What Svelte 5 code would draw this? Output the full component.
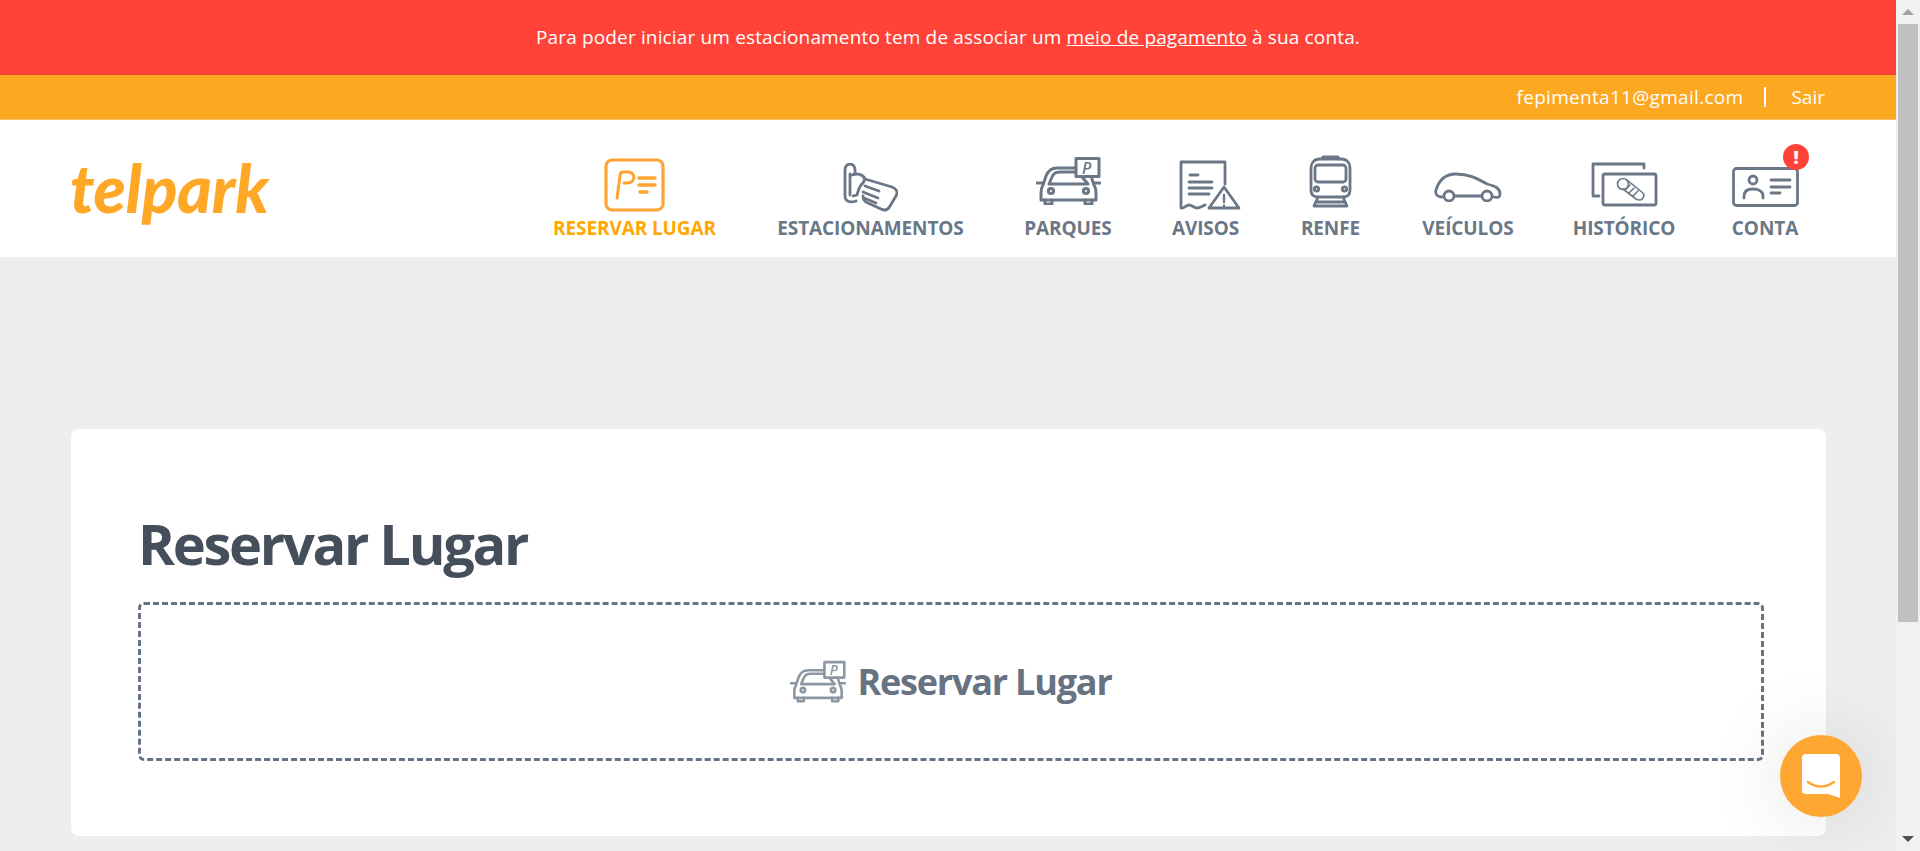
<script>
  const links = ['Reservar Lugar', 'Estacionamentos', 'Parques', 'Avisos', 'Renfe', 'Veículos', 'Histórico', 'Conta'];
</script>

{#snippet carIcon()}
  <svg class="car" viewBox="0 0 65 48" fill="none" stroke="currentColor" stroke-width="3" stroke-linecap="round" stroke-linejoin="round">
    <path d="M39 11H21c-6 0-9 3-11 8l-3 9c-2 3-2 5-2 8v7h55v-7c0-3 0-5-2-8l-2-6" />
    <path d="M13 27l3-7c1-3 4-5 8-5h15M13 27h39M46 20l6 7" />
    <path d="M1 26h6M58 26h6" />
    <circle cx="15" cy="34" r="2.6" />
    <circle cx="50" cy="34" r="2.6" />
    <path d="M9 43v4h7v-4M49 43v4h7v-4" />
    <rect x="40" y="1.5" width="23" height="18" fill="#fff" />
    <text x="46" y="16.5" class="sign">P</text>
  </svg>
{/snippet}

<div class="page">
  <div class="main">
    <div class="alert">
      Para poder iniciar um estacionamento tem de associar um <u>meio de pagamento</u> à sua conta.
    </div>
    <div class="userbar">
      <span class="email">fepimenta11@gmail.com</span>
      <i></i>
      <span>Sair</span>
    </div>
    <header>
      <div class="logo">telpark</div>
      <nav>
        {#each links as label, i}
          <div class="item" class:active={i === 0}>
            <div class="icon ic{i}">
              {#if i === 0}
                <svg width="61" height="54" viewBox="0 0 61 54" fill="none" stroke="#ffa433" stroke-width="3.2" stroke-linecap="round">
                  <rect x="2" y="2" width="57" height="50" rx="6" />
                  <path d="M13 40l3-22c0-3 1-4 3-4h5c8 0 8 11-1 11h-3" stroke-width="3" />
                  <path d="M35 20h16M35 27h16M36 34h7" stroke-width="3.4" />
                </svg>
              {:else if i === 1}
                <svg width="55" height="49" viewBox="0 0 55 49" fill="none" stroke="currentColor" stroke-width="2.8" stroke-linecap="round" stroke-linejoin="round">
                  <path d="M12 11V7C12-1 2-1 2 7v26c0 6 6 7 11 5" />
                  <path d="M7 11v21" />
                  <path d="M9 12c5-2 11-1 13 4l-2 4c-3 2-5 8-6 12l-4 1" />
                  <path d="M22 16l27 8c5 2 6 5 4 9l-6 10c-2 4-5 5-9 3L25 40c-3-1-5-4-5-7" />
                  <path d="M22 23l14 5M20 29l15 6M21 35l12 5" />
                </svg>
              {:else if i === 2}
                {@render carIcon()}
              {:else if i === 3}
                <svg width="62" height="50" viewBox="0 0 62 50" fill="none" stroke="currentColor" stroke-width="2.8" stroke-linecap="round" stroke-linejoin="round">
                  <path d="M46 24V2H2v46c3 1 5-3 8-3s5 3 8 3 5-2 8-3" />
                  <path d="M11 15h8M10 22h23M10 28h23M10 34h20" />
                  <path d="M45 27l15 21H30z" />
                  <path d="M45 35v7M45 45.5v.5" stroke-width="2.4" />
                </svg>
              {:else if i === 4}
                <svg width="43" height="53" viewBox="0 0 43 53" fill="none" stroke="currentColor" stroke-width="2.8" stroke-linecap="round" stroke-linejoin="round">
                  <path d="M13 4l1-2h15l1 2" />
                  <path d="M11 4h21c6 0 9 4 9 9v22c0 5-3 7-7 7H9c-4 0-7-2-7-7V13c0-5 3-9 9-9z" />
                  <rect x="6" y="10" width="31" height="17" rx="3" />
                  <circle cx="7.5" cy="34" r="2.2" />
                  <circle cx="35.5" cy="34" r="2.2" />
                  <path d="M9 42l-4 9h33l-4-9M8 47h27" />
                </svg>
              {:else if i === 5}
                <svg width="68" height="30" viewBox="0 0 68 30" fill="none" stroke="currentColor" stroke-width="2.8" stroke-linecap="round" stroke-linejoin="round">
                  <path d="M8 25c-5 0-7-3-6-7 3-10 9-16 20-16 13 0 20 4 31 10 8 2 13 4 13 10 0 3-2 4-6 3" />
                  <path d="M21 24h26" />
                  <circle cx="15" cy="24" r="5" />
                  <circle cx="53" cy="24" r="5" />
                </svg>
              {:else if i === 6}
                <svg width="67" height="45" viewBox="0 0 67 45" fill="none" stroke="currentColor" stroke-width="2.8" stroke-linecap="round" stroke-linejoin="round">
                  <path d="M53 6V2H2v32h6" />
                  <rect x="12" y="12" width="53" height="31" rx="2" />
                  <g stroke-width="1.6">
                    <circle cx="32" cy="22" r="5.5" />
                    <path d="M36 18l16 13c2 2 0 7-3 7-2 0-3 0-4-1L32 27" />
                    <path d="M34 28l5-5M38 31l5-5M42 34l5-5" />
                  </g>
                </svg>
              {:else}
                <svg width="67" height="40" viewBox="0 0 67 40" fill="none" stroke="currentColor" stroke-width="2.8" stroke-linecap="round" stroke-linejoin="round">
                  <rect x="1.5" y="1.5" width="64" height="37" rx="3" />
                  <circle cx="21" cy="13" r="4" />
                  <path d="M12 31v-2c0-5 4-7 9-7s10 2 10 7v2" />
                  <path d="M39 13h19M39 20h19M39 26h9" />
                </svg>
              {/if}
            </div>
            {#if i === 7}
              <span class="badge">!</span>
            {/if}
            <span class="label">{label}</span>
          </div>
        {/each}
      </nav>
    </header>
    <section class="content">
      <div class="card">
        <h1>Reservar Lugar</h1>
        <button class="dashed">
          {@render carIcon()}
          <span>Reservar Lugar</span>
        </button>
      </div>
    </section>
  </div>
  <div class="scrollbar">
    <b class="up"></b>
    <div class="track"><div class="thumb"></div></div>
    <b class="down"></b>
  </div>
  <div class="chat">
    <svg width="38" height="44" viewBox="0 0 38 44">
      <path d="M4 0h30a4 4 0 0 1 4 4v40l-12-4H4a4 4 0 0 1-4-4V4a4 4 0 0 1 4-4z" fill="#fff" />
      <path d="M6 28c8 6 18 6 26 0" fill="none" stroke="#ffa733" stroke-width="2.5" stroke-linecap="round" />
    </svg>
  </div>
</div>

<style>
  :global(body) {
    margin: 0;
    overflow: hidden;
  }

  .page {
    display: flex;
    height: 851px;
    overflow: hidden;
    position: relative;
    font-family: "Open Sans", "Noto Sans", sans-serif;
  }

  .main {
    flex: 1;
    min-width: 0;
    background: #eee;
  }

  .alert {
    height: 75px;
    background: #ff4338;
    color: #fff;
    font-size: 19px;
    font-weight: 500;
    letter-spacing: 0.15px;
    line-height: 75px;
    text-align: center;
  }

  .userbar {
    height: 44px;
    border-bottom: 1px solid #fdc060;
    background: #fca821;
    color: #fff;
    font-size: 19px;
    font-weight: 500;
    display: flex;
    align-items: center;
    justify-content: flex-end;
    padding-right: 71px;
  }

  .email {
    letter-spacing: 0.3px;
  }

  .userbar i {
    width: 2px;
    height: 20px;
    margin: 0 25px 0 21px;
    background: #fff;
  }

  header {
    height: 137px;
    background: #fff;
    display: flex;
    justify-content: space-between;
    padding: 0 100px 0 70px;
  }

  .logo {
    font-family: "Lato", sans-serif;
    font-size: 66px;
    font-weight: 900;
    font-style: italic;
    letter-spacing: -0.2px;
    color: #ffa726;
    line-height: 80px;
    padding-top: 28px;
  }

  nav {
    display: grid;
    grid-template-columns: 165px 187px 88px 67px 63px 92px 100px 62px;
    gap: 60px;
    padding-top: 28px;
  }

  .item {
    display: flex;
    flex-direction: column;
    align-items: center;
    color: #6b7786;
    position: relative;
  }

  .item.active {
    color: #ffa800;
  }

  .icon {
    height: 65px;
    box-sizing: border-box;
    display: flex;
    align-items: flex-end;
    justify-content: center;
    filter: blur(0.3px);
  }

  .ic0, .ic1 { padding-bottom: 1px; }
  .ic2 { padding-bottom: 8px; }
  .ic3 { padding-bottom: 3px; padding-left: 8px; }
  .ic4 { padding-bottom: 5px; }
  .ic5 { padding-bottom: 11px; }
  .ic6, .ic7 { padding-bottom: 6px; }

  .label {
    font-size: 19px;
    font-weight: 700;
    letter-spacing: -0.1px;
    line-height: 26px;
    margin-top: 2px;
    text-transform: uppercase;
    white-space: nowrap;
  }

  .badge {
    position: absolute;
    top: -4px;
    right: -13px;
    width: 26px;
    height: 26px;
    border-radius: 50%;
    background: #ff4338;
    color: #fff;
    font-size: 18px;
    font-weight: 800;
    line-height: 26px;
    text-align: center;
  }

  .car {
    width: 65px;
    height: 48px;
  }

  .sign {
    font-size: 16px;
    font-style: italic;
    font-weight: 600;
    fill: currentColor;
    stroke: none;
  }

  .content {
    padding: 172px 70px 0 71px;
  }

  .card {
    height: 407px;
    box-sizing: border-box;
    background: #fff;
    border-radius: 8px;
    padding: 78px 62px 0 67px;
  }

  h1 {
    margin: 0;
    height: 95px;
    font-size: 56px;
    font-weight: 700;
    letter-spacing: -2.3px;
    line-height: 72px;
    color: #454e5b;
  }

  .dashed {
    width: 100%;
    height: 159px;
    display: flex;
    align-items: center;
    justify-content: center;
    gap: 11px;
    border: 3px dashed #667386;
    border-radius: 6px;
    background: none;
    font: inherit;
    font-size: 36px;
    font-weight: 700;
    letter-spacing: -1.2px;
    color: #677282;
  }

  .dashed .car {
    color: #8d96a3;
    width: 56px;
    height: 45px;
    filter: blur(0.3px);
  }

  .scrollbar {
    width: 24px;
    background: #f1f1f1;
    display: flex;
    flex-direction: column;
    align-items: center;
    position: relative;
    z-index: 2;
  }

  .scrollbar b {
    height: 24px;
    width: 20px;
    display: flex;
    align-items: center;
    justify-content: center;
  }

  .scrollbar b::after {
    content: "";
    border: 6px solid transparent;
    border-top: 0;
    border-bottom: 6px solid #a3a3a3;
  }

  .scrollbar b.down::after {
    border-bottom: 0;
    border-top: 6px solid #505050;
  }

  .track {
    flex: 1;
    width: 20px;
  }

  .thumb {
    height: 598px;
    background: #c1c1c1;
  }

  .chat {
    position: absolute;
    left: 1780px;
    top: 735px;
    width: 82px;
    height: 82px;
    border-radius: 50%;
    background: #ffa733;
    box-shadow: 0 0 80px rgba(0, 0, 0, 0.13);
    display: flex;
    align-items: center;
    justify-content: center;
  }
</style>
